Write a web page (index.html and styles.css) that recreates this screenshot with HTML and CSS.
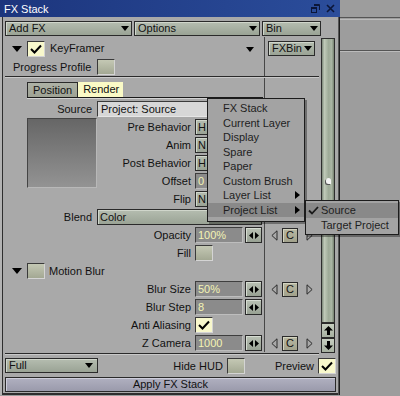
FILE: index.html
```html
<!DOCTYPE html>
<html lang="en">
<head>
    <meta charset="UTF-8">
    <title>FX Stack</title>
    <link rel="stylesheet" href="styles.css">
</head>
<body>

    <div class="window">
        <!-- Title bar -->
        <div class="titlebar">
            <span>FX Stack</span>
            <span class="title-icons">
                <svg width="9" height="9" viewBox="0 0 9 9"><path d="M3 0.5h5.5v5.5M3 1.5h5.5" fill="none" stroke="#0b1638" stroke-width="1"/><rect x="0.5" y="3.5" width="5" height="5" fill="none" stroke="#0b1638"/><path d="M0.5 4.5h5" stroke="#0b1638"/></svg>
                <svg width="9" height="9" viewBox="0 0 9 9"><path d="M1 1L8 8M8 1L1 8" stroke="#0b1638" stroke-width="1.6"/></svg>
            </span>
        </div>

        <div class="frame">
            <!-- Toolbar -->
            <div class="toolbar">
                <div class="drop tb-add">Add FX<i class="tri"></i></div>
                <div class="drop tb-options">Options<i class="tri"></i></div>
                <div class="drop tb-bin">Bin<i class="tri"></i></div>
            </div>

            <div class="main">
                <div class="rows">
                    <!-- FX header -->
                    <div class="row head">
                        <div class="l head-l">
                            <i class="expander"></i>
                            <span class="check on"><svg width="12" height="10" viewBox="0 0 12 10"><polyline points="1,5 4.5,8.5 11,1.5" fill="none" stroke="#000" stroke-width="2"/></svg></span>
                            <span class="fx-name">KeyFramer</span>
                            <i class="tri head-tri"></i>
                        </div>
                        <div class="r head-r">
                            <div class="drop fxbin">FXBin<i class="tri"></i></div>
                        </div>
                    </div>

                    <div class="row">
                        <div class="l progress">
                            <span>Progress Profile</span>
                            <span class="check"></span>
                        </div>
                        <div class="r"></div>
                    </div>

                    <div class="sep"></div>

                    <!-- Tabs -->
                    <div class="row tabs-row">
                        <div class="l tabs-l">
                            <div class="tabs">
                                <span class="tab">Position</span>
                                <span class="tab active">Render</span>
                            </div>
                        </div>
                        <div class="r"></div>
                    </div>

                    <div class="row source-row">
                        <div class="l wide">
                            <span class="lbl">Source</span>
                            <span class="field-light">Project: Source</span>
                        </div>
                        <div class="r"></div>
                    </div>

                    <!-- Preview + behaviours -->
                    <div class="row group">
                        <div class="l group-l">
                            <div class="thumb"></div>
                            <div class="stack">
                                <div class="frow short"><span class="lbl">Pre Behavior</span><span class="drop sm">H</span></div>
                                <div class="frow short"><span class="lbl">Anim</span><span class="drop sm">N</span></div>
                                <div class="frow short"><span class="lbl">Post Behavior</span><span class="drop sm">H</span></div>
                                <div class="frow short"><span class="lbl">Offset</span><span class="val">0</span></div>
                            </div>
                        </div>
                        <div class="r"></div>
                    </div>

                    <div class="row">
                        <div class="l frow"><span class="lbl">Flip</span><span class="drop sm">N</span></div>
                        <div class="r"></div>
                    </div>

                    <div class="row">
                        <div class="l wide"><span class="lbl">Blend</span><span class="drop sm">Color</span></div>
                        <div class="r"></div>
                    </div>

                    <div class="row">
                        <div class="l frow">
                            <span class="lbl">Opacity</span>
                            <span class="spin-group"><span class="val">100%</span><span class="spin"><svg width="10" height="7" viewBox="0 0 10 7"><path d="M0 3.5L4 0V7ZM10 3.5L6 0V7Z"/></svg></span></span>
                        </div>
                        <div class="r rc">
                            <svg width="7" height="11" viewBox="0 0 7 11"><path d="M6 0.8L0.9 5.5L6 10.2Z" fill="none" stroke="#2a2a2a"/></svg>
                            <span class="cbtn">C</span>
                            <svg width="7" height="11" viewBox="0 0 7 11"><path d="M1 0.8L6.1 5.5L1 10.2Z" fill="none" stroke="#2a2a2a"/></svg>
                        </div>
                    </div>

                    <div class="row">
                        <div class="l frow"><span class="lbl">Fill</span><span class="check"></span></div>
                        <div class="r"></div>
                    </div>

                    <div class="row">
                        <div class="l head-l motion">
                            <i class="expander"></i>
                            <span class="check"></span>
                            <span class="fx-name">Motion Blur</span>
                        </div>
                        <div class="r"></div>
                    </div>

                    <div class="row">
                        <div class="l frow">
                            <span class="lbl">Blur Size</span>
                            <span class="spin-group"><span class="val">50%</span><span class="spin"><svg width="10" height="7" viewBox="0 0 10 7"><path d="M0 3.5L4 0V7ZM10 3.5L6 0V7Z"/></svg></span></span>
                        </div>
                        <div class="r rc">
                            <svg width="7" height="11" viewBox="0 0 7 11"><path d="M6 0.8L0.9 5.5L6 10.2Z" fill="none" stroke="#2a2a2a"/></svg>
                            <span class="cbtn">C</span>
                            <svg width="7" height="11" viewBox="0 0 7 11"><path d="M1 0.8L6.1 5.5L1 10.2Z" fill="none" stroke="#2a2a2a"/></svg>
                        </div>
                    </div>

                    <div class="row">
                        <div class="l frow">
                            <span class="lbl">Blur Step</span>
                            <span class="spin-group"><span class="val">8</span><span class="spin"><svg width="10" height="7" viewBox="0 0 10 7"><path d="M0 3.5L4 0V7ZM10 3.5L6 0V7Z"/></svg></span></span>
                        </div>
                        <div class="r"></div>
                    </div>

                    <div class="row">
                        <div class="l frow">
                            <span class="lbl">Anti Aliasing</span>
                            <span class="check on"><svg width="12" height="10" viewBox="0 0 12 10"><polyline points="1,5 4.5,8.5 11,1.5" fill="none" stroke="#000" stroke-width="2"/></svg></span>
                        </div>
                        <div class="r"></div>
                    </div>

                    <div class="row">
                        <div class="l frow">
                            <span class="lbl">Z Camera</span>
                            <span class="spin-group"><span class="val">1000</span><span class="spin"><svg width="10" height="7" viewBox="0 0 10 7"><path d="M0 3.5L4 0V7ZM10 3.5L6 0V7Z"/></svg></span></span>
                        </div>
                        <div class="r rc">
                            <svg width="7" height="11" viewBox="0 0 7 11"><path d="M6 0.8L0.9 5.5L6 10.2Z" fill="none" stroke="#2a2a2a"/></svg>
                            <span class="cbtn">C</span>
                            <svg width="7" height="11" viewBox="0 0 7 11"><path d="M1 0.8L6.1 5.5L1 10.2Z" fill="none" stroke="#2a2a2a"/></svg>
                        </div>
                    </div>

                    <div class="sep sep-bottom"></div>
                </div>

                <!-- Scrollbar -->
                <div class="vscroll">
                    <div class="track"><span class="grip"></span></div>
                    <div class="sbtn"><svg width="9" height="9" viewBox="0 0 9 9"><path d="M4.5 0L9 4.5H6V9H3V4.5H0Z"/></svg></div>
                    <div class="sbtn"><svg width="9" height="9" viewBox="0 0 9 9"><path d="M4.5 9L9 4.5H6V0H3V4.5H0Z"/></svg></div>
                </div>
            </div>

            <!-- Bottom bar -->
            <div class="bottom">
                <div class="drop full">Full<i class="tri"></i></div>
                <span class="hud-lbl">Hide HUD</span>
                <span class="check"></span>
                <span class="prev-lbl">Preview</span>
                <span class="check on"><svg width="12" height="10" viewBox="0 0 12 10"><polyline points="1,5 4.5,8.5 11,1.5" fill="none" stroke="#000" stroke-width="2"/></svg></span>
            </div>
            <div class="apply">Apply FX Stack</div>
        </div>
    </div>

    <!-- Source popup menu -->
    <div class="menu">
        <div class="item">FX Stack</div>
        <div class="item">Current Layer</div>
        <div class="item">Display</div>
        <div class="item">Spare</div>
        <div class="item">Paper</div>
        <div class="item">Custom Brush</div>
        <div class="item">Layer List<i class="arrow"></i></div>
        <div class="item hl">Project List<i class="arrow"></i></div>
    </div>

    <div class="menu submenu">
        <div class="item hl"><svg class="tick" width="11" height="9" viewBox="0 0 11 9"><polyline points="1,4.5 4,7.5 10,1" fill="none" stroke="#1a1a1a" stroke-width="1.8"/></svg>Source</div>
        <div class="item">Target Project</div>
    </div>

</body>
</html>
```

FILE: styles.css
```css
/* Base Reset */
* {
    margin: 0;
    padding: 0;
    box-sizing: border-box;
}

body {
    width: 400px;
    height: 396px;
    overflow: hidden;
    position: relative;
    font-family: 'Liberation Sans', Arial, sans-serif;
    font-size: 11px;
    color: #111;
    background: linear-gradient(#9d9d9d 0 17px, #555 17px 18px, #9d9d9d 18px 19px, #bcbcbc 19px 20px,
        #9d9d9d 20px 50px, #555 50px 51px, #bcbcbc 51px 52px, #9d9d9d 52px);
}

/* Window */
.window {
    width: 340px;
    height: 395px;
    background-color: #a9a9a9;
    box-shadow: inset 2px 0 #b3b3b3, inset 3px 0 #2e2e2e, inset -1px 0 #1e1e1e,
        inset -2px 0 #555, inset 0 -2px #2e2e2e;
}

.titlebar {
    height: 17px;
    background: linear-gradient(90deg, #1c357d, #2b4d9b);
    color: #fff;
    display: flex;
    align-items: center;
    justify-content: space-between;
    padding: 0 5px 0 4px;
}

.title-icons {
    display: flex;
    gap: 6px;
}

.frame {
    padding: 4px 4px 0 5px;
}

/* Sage drop-down buttons */
.drop {
    height: 15px;
    border: 1px solid #2a2a2a;
    background: linear-gradient(#b5bdb0, #9aa395);
    box-shadow: inset 1px 1px #d0d6cb;
    display: flex;
    align-items: center;
    justify-content: space-between;
    padding: 0 2px 0 3px;
    line-height: 13px;
    white-space: nowrap;
}

.tri {
    width: 0;
    height: 0;
    border-left: 4px solid transparent;
    border-right: 4px solid transparent;
    border-top: 5px solid #000;
}

.toolbar {
    display: flex;
    gap: 2px;
    margin-bottom: 1px;
}

.tb-add { width: 127px; }
.tb-options { width: 126px; }
.tb-bin { width: 59px; }

/* Main panel */
.main {
    display: flex;
    gap: 1px;
    height: 318px;
}

.rows {
    width: 314px;
    display: flex;
    flex-direction: column;
}

.row {
    display: grid;
    grid-template-columns: 260px 54px;
    height: 18px;
}

.l {
    border-right: 1px solid #474747;
}

.head {
    height: 21px;
}

.head-l {
    display: flex;
    align-items: center;
    padding-left: 7px;
}

.head .head-l {
    align-items: flex-start;
    padding-top: 4px;
}

.expander {
    width: 0;
    height: 0;
    border-left: 5px solid transparent;
    border-right: 5px solid transparent;
    border-top: 6px solid #000;
    margin-right: 5px;
}

.head .expander {
    margin-top: 5px;
}

.fx-name {
    margin-left: 5px;
    line-height: 15px;
}

.motion .fx-name {
    margin-left: 4px;
}

.head-tri {
    margin-left: auto;
    margin-right: 10px;
    margin-top: 6px;
}

.head-r {
    padding: 4px 0 0 3px;
}

.fxbin {
    width: 47px;
}

.progress {
    display: flex;
    align-items: center;
    padding-left: 8px;
    gap: 6px;
}

/* Checkboxes */
.check {
    width: 18px;
    height: 16px;
    border: 1px solid;
    border-color: #3a3a3a #d4d4d4 #d4d4d4 #3a3a3a;
    background: linear-gradient(#c4c8b4, #a3a893);
    display: flex;
    align-items: center;
    justify-content: center;
    flex-shrink: 0;
}

.check.on {
    background: #f8f8cc;
}

.sep {
    height: 2px;
    border-top: 1px solid #2a2a2a;
    background-color: #c9c9c9;
}

.sep-bottom {
    margin-top: 1px;
}

/* Tabs */
.tabs-row {
    height: 21px;
}

.tabs-l {
    padding: 4px 0 0 22px;
}

.tabs {
    display: flex;
    border-bottom: 1px solid #1a1a1a;
    box-shadow: 0 1px #d2d2d2;
    margin-right: 1px;
}

.tab {
    height: 15px;
    line-height: 15px;
    padding: 0 5px;
    border: 1px solid #2a2a2a;
    border-bottom: none;
    background: linear-gradient(#aeb2a6, #9ea294);
}

.tab.active {
    border: none;
    background: #fafac6;
    padding: 0 5px;
    width: 45px;
}

/* Field rows */
.source-row {
    height: 19px;
}

.wide {
    display: grid;
    grid-template-columns: 87px 165px;
    column-gap: 5px;
    align-items: center;
}

.frow {
    display: grid;
    grid-template-columns: 186px 67px;
    column-gap: 4px;
    align-items: center;
    height: 18px;
}

.frow.short {
    grid-template-columns: 94px 67px;
}

.lbl {
    text-align: right;
    white-space: nowrap;
}

.field-light {
    height: 16px;
    line-height: 14px;
    padding-left: 3px;
    background-color: #d7d7d7;
    border: 1px solid;
    border-color: #3a3a3a #e6e6e6 #e6e6e6 #3a3a3a;
}

.drop.sm {
    height: 16px;
    padding-left: 2px;
}

.val {
    height: 16px;
    line-height: 14px;
    padding-left: 2px;
    background-color: #8b8b8b;
    color: #f3f3b4;
    border: 1px solid;
    border-color: #3e3e3e #bdbdbd #bdbdbd #3e3e3e;
}

.spin-group {
    display: flex;
    gap: 2px;
}

.spin-group .val {
    width: 48px;
}

.spin {
    width: 17px;
    height: 16px;
    border: 1px solid #2a2a2a;
    background: linear-gradient(#b9c1b4, #98a193);
    box-shadow: inset 1px 1px #d6dcd2;
    display: flex;
    align-items: center;
    justify-content: center;
}

/* Thumbnail group */
.group {
    height: 72px;
}

.group-l {
    display: flex;
    padding-left: 22px;
}

.thumb {
    width: 70px;
    height: 70px;
    border: 1px solid;
    border-color: #444 #b8b8b8 #b8b8b8 #444;
    background: linear-gradient(#666, #939393);
}

.stack {
    display: flex;
    flex-direction: column;
}

/* Right column controls */
.rc {
    display: flex;
    align-items: center;
    padding-left: 6px;
}

.cbtn {
    width: 16px;
    height: 15px;
    margin: 0 8px 0 4px;
    border: 1px solid #2a2a2a;
    background: linear-gradient(#b8b8a2, #a2a28c);
    box-shadow: inset 1px 1px #d4d4c0;
    text-align: center;
    line-height: 13px;
}

/* Scrollbar */
.vscroll {
    width: 14px;
    margin-left: 1px;
    padding-top: 1px;
    display: flex;
    flex-direction: column;
}

.track {
    height: 285px;
    border: 1px solid #2e2e2e;
    background: linear-gradient(90deg, #7b8778, #c0cab9 20%, #9eab98 55%, #aab5a4 80%, #75806f);
    display: flex;
    justify-content: center;
}

.grip {
    width: 5px;
    height: 6px;
    margin-top: 139px;
    border-radius: 3px 3px 0 3px;
    background-color: #f4f4f4;
    box-shadow: -1px 1px #555;
}

.sbtn {
    height: 15px;
    border: 1px solid #2a2a2a;
    background: linear-gradient(#c6cec0, #a6b0a0);
    display: flex;
    align-items: center;
    justify-content: center;
}

/* Bottom bar */
.bottom {
    height: 21px;
    padding-top: 3px;
    display: flex;
    align-items: flex-start;
}

.full {
    width: 93px;
    padding-right: 4px;
}

.hud-lbl {
    margin-left: auto;
    line-height: 16px;
}

.prev-lbl {
    margin-left: 30px;
    line-height: 16px;
}

.bottom .check {
    margin-left: 4px;
}

.apply {
    margin-top: 1px;
    height: 15px;
    border: 1px solid #2a2a2a;
    background: linear-gradient(#b0b0c0, #9a9aab);
    box-shadow: inset 1px 1px #cdcdda;
    text-align: center;
    line-height: 13px;
}

/* Popup menus */
.menu {
    position: absolute;
    left: 207px;
    top: 98px;
    width: 98px;
    height: 124px;
    padding-top: 2px;
    background-color: #a3a3a3;
    border: 1px solid #1c1c1c;
    box-shadow: 2px 2px 0 rgba(0, 0, 0, 0.35);
    color: #1e1e1e;
}

.item {
    height: 14.5px;
    line-height: 14.5px;
    padding-left: 15px;
    position: relative;
    white-space: nowrap;
}

.item.hl {
    background-color: #898989;
}

.arrow {
    position: absolute;
    right: 4px;
    top: 3px;
    width: 0;
    height: 0;
    border-top: 4px solid transparent;
    border-bottom: 4px solid transparent;
    border-left: 5px solid #000;
}

.submenu {
    left: 305px;
    top: 200px;
    width: 94px;
    height: 35px;
}

.tick {
    position: absolute;
    left: 2px;
    top: 3px;
}
```
